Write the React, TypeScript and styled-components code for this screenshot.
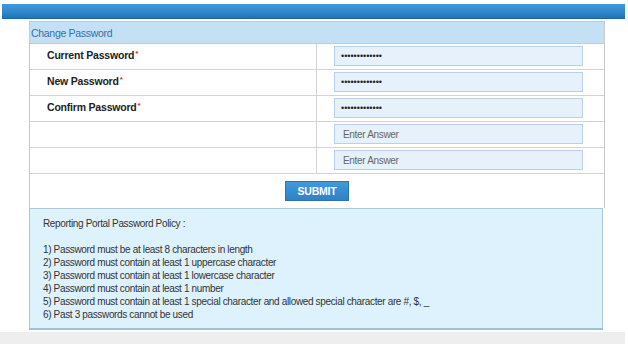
import React from 'react';
import styled, { createGlobalStyle } from 'styled-components';

const GlobalStyle = createGlobalStyle`
  html, body {
    margin: 0;
    padding: 0;
    background: #ffffff;
  }
  body {
    font-family: 'Liberation Sans', Arial, sans-serif;
    font-size: 11px;
    color: #222;
  }
`;

const Page = styled.div`
  width: 628px;
  height: 344px;
  display: flex;
  flex-direction: column;
  overflow: hidden;
`;

const TopBar = styled.div`
  margin: 4px 3px 0 2px;
  height: 14px;
  background: linear-gradient(to bottom, #3e9bdb 0%, #2f86c8 60%, #2473b6 100%);
  border-bottom: 1px solid #1f66a3;
`;

const Panel = styled.div`
  margin: 2px 0 0 29px;
  width: 574px;
  border: 1px solid #c9c9c9;
  border-bottom: none;
  display: flex;
  flex-direction: column;
`;

const PanelHeader = styled.div`
  height: 21px;
  background: #c4e0f5;
  color: #3570a6;
  font-size: 10.5px;
  letter-spacing: -0.3px;
  display: flex;
  align-items: center;
  padding-left: 1px;
  border-bottom: 1px solid #c9c9c9;
`;

const Row = styled.div`
  display: grid;
  grid-template-columns: 287px 1fr;
  height: 25px;
  border-bottom: 1px solid #d3d3d3;
`;

const LabelCell = styled.div`
  border-right: 1px solid #d3d3d3;
  display: flex;
  align-items: center;
  padding-left: 17px;
  font-weight: bold;
  font-size: 10.5px;
  letter-spacing: -0.2px;
  color: #222;
  padding-bottom: 3px;
`;

const Star = styled.span`
  color: #e0262b;
  font-size: 8px;
  letter-spacing: 0;
  margin-left: 1px;
  position: relative;
  top: -2px;
`;

const FieldCell = styled.div`
  display: flex;
  align-items: center;
  padding-left: 17px;
  padding-bottom: 1px;
`;

const Input = styled.input<{ $secret?: boolean }>`
  box-sizing: border-box;
  width: 249px;
  height: 20px;
  margin: 0;
  padding: 0 0 0 ${p => (p.$secret ? '6px' : '8px')};
  border: 1px solid #b8d1e8;
  background: #e6f1fb;
  font-family: 'Liberation Sans', Arial, sans-serif;
  font-size: ${p => (p.$secret ? '9px' : '10px')};
  letter-spacing: ${p => (p.$secret ? '0' : '-0.33px')};
  color: #222;
  outline: none;
  &::placeholder {
    color: #666;
  }
`;

const SubmitRow = styled.div`
  height: 33px;
  display: flex;
  justify-content: center;
  align-items: center;
  padding-bottom: 1px;
`;

const SubmitButton = styled.button`
  width: 64px;
  height: 20px;
  border: 1px solid #2d73b2;
  background: linear-gradient(to bottom, #4499da 0%, #2d82c8 100%);
  color: #fff;
  font-family: 'Liberation Sans', Arial, sans-serif;
  font-weight: bold;
  font-size: 10.5px;
  letter-spacing: -0.2px;
  padding: 0;
  cursor: pointer;
`;

const Policy = styled.div`
  margin-left: 29px;
  box-sizing: border-box;
  width: 574px;
  height: 122px;
  background: #def2fd;
  border: 1px solid #a9c9da;
  border-bottom: 2px solid #a5c0ce;
  padding: 8px 0 0 13px;
  font-size: 10px;
  letter-spacing: -0.35px;
  color: #333;
  line-height: 13px;
`;

const PolicyTitle = styled.div`
  margin-bottom: 13px;
`;

const PolicyLine = styled.div``;

const BottomStrip = styled.div`
  margin-top: 2px;
  width: 625px;
  height: 12px;
  background: #eeeeee;
`;

const fields = [
  { label: 'Current Password', secret: true },
  { label: 'New Password', secret: true },
  { label: 'Confirm Password', secret: true },
  { label: '', secret: false },
  { label: '', secret: false },
];

const rules = [
  '1) Password must be at least 8 characters in length',
  '2) Password must contain at least 1 uppercase character',
  '3) Password must contain at least 1 lowercase character',
  '4) Password must contain at least 1 number',
  '5) Password must contain at least 1 special character and allowed special character are #, $, _',
  '6) Past 3 passwords cannot be used',
];

export default function App() {
  return (
    <Page>
      <GlobalStyle />
      <TopBar />
      <Panel>
        <PanelHeader>Change Password</PanelHeader>
        {fields.map((f, i) => (
          <Row key={i}>
            <LabelCell>
              {f.label}
              {f.label && <Star>*</Star>}
            </LabelCell>
            <FieldCell>
              {f.secret ? (
                <Input $secret type="password" defaultValue="abcdefghijklm" readOnly />
              ) : (
                <Input type="text" placeholder="Enter Answer" />
              )}
            </FieldCell>
          </Row>
        ))}
        <SubmitRow>
          <SubmitButton>SUBMIT</SubmitButton>
        </SubmitRow>
      </Panel>
      <Policy>
        <PolicyTitle>Reporting Portal Password Policy :</PolicyTitle>
        {rules.map(r => (
          <PolicyLine key={r}>{r}</PolicyLine>
        ))}
      </Policy>
      <BottomStrip />
    </Page>
  );
}
